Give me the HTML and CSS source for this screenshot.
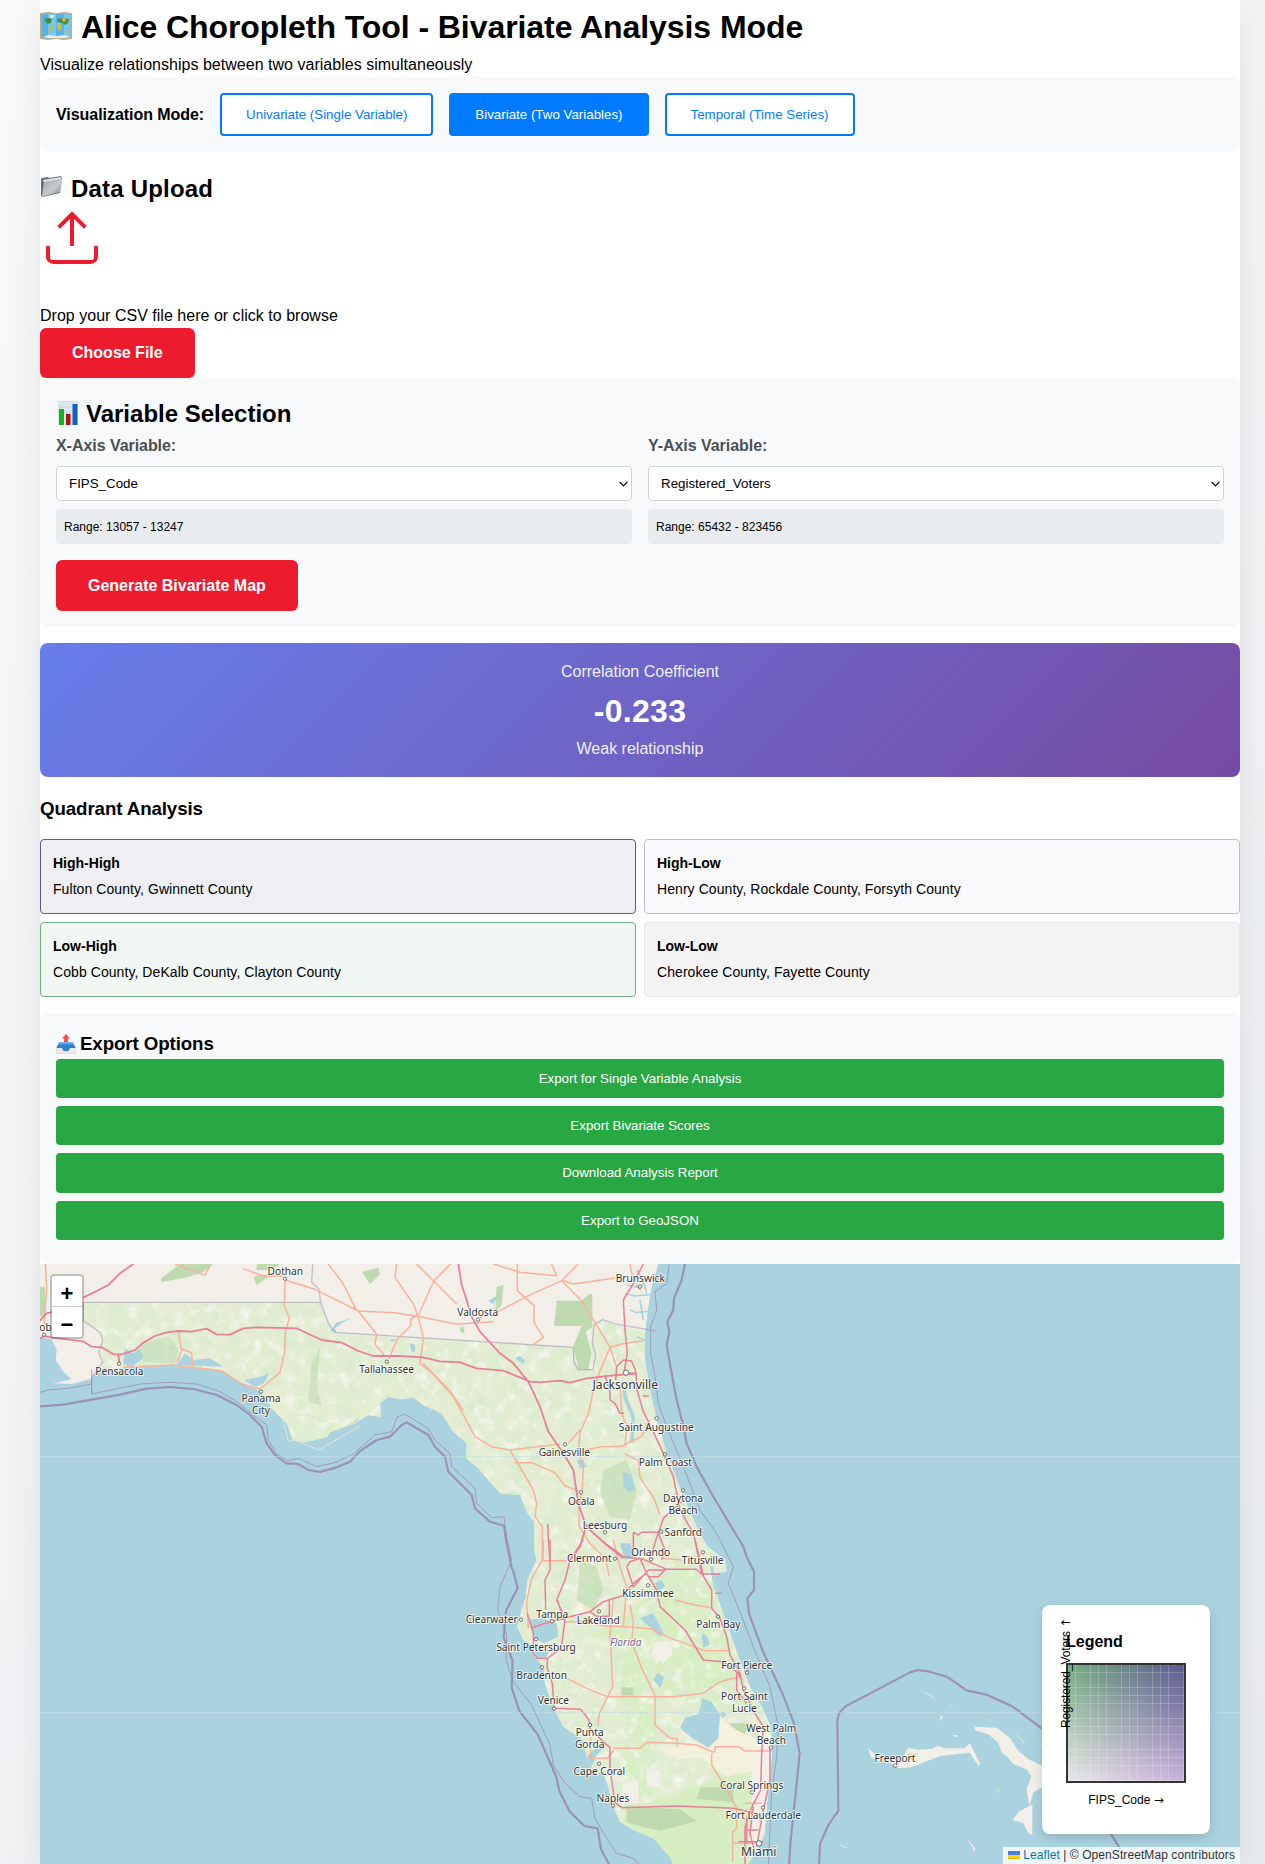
FILE: index.html
```html
<!DOCTYPE html>
<html lang="en">
<head>
<meta charset="utf-8">
<title>Alice Choropleth Tool - Bivariate Analysis Mode</title>
<link rel="stylesheet" href="styles.css">
</head>
<body>
<div class="container">
  <header>
    <h1><svg class="emoji-map" viewBox="0 0 32 28"><path fill="#c9a987" d="M0 1 8 0l8 1 8-1 8 1v26l-8 1-8-1-8 1-8-1z"/><path fill="#52b4e6" d="M1.500 2.500 8 1.500l8 1 8-1 6.500 1v23l-6.500 1-8-1-8 1-6.500-1z"/><path fill="#8ed3f2" d="M8 1.500l8 1v23l-8 1zM24 1.500l6.500 1v23l-6.500 1z" opacity=".6"/><path fill="#e8eef0" d="M10 3h5l-2 3h-3zM3 25l6-2 8 1 8-1 5 2-6 1H8z"/><path fill="#4d8a35" d="M4 7l5-1 3 1-1 4-3 1-2-2zM17 7l6-1 6 1-1 4-3 2-2-2-5-1z"/><path fill="#d6b740" d="M9 13l4 2-1 3-2 4-1-4zM17 11l4 0 1 3-2 5-2-1-1-4zM25 19l3-1 1 2-3 1zM22 6l3 0 1 3-3 1z"/></svg><span>Alice Choropleth Tool - Bivariate Analysis Mode</span></h1>
    <p class="line">Visualize relationships between two variables simultaneously</p>
  </header>

  <div class="mode-panel">
    <span class="mode-label">Visualization Mode:</span>
    <button class="mode">Univariate (Single Variable)</button>
    <button class="mode active">Bivariate (Two Variables)</button>
    <button class="mode">Temporal (Time Series)</button>
  </div>

  <section class="upload">
    <h2><svg class="emoji-folder" viewBox="0 0 24 24"><defs><linearGradient id="fold" x2="1" y2="1"><stop stop-color="#a3a9af"/><stop offset=".55" stop-color="#c5c9cd"/><stop offset="1" stop-color="#858c93"/></linearGradient></defs><path fill="#68717a" d="M1 4l1-1 6-1 1 1 12-2 1 2-2 15-18 4-1-2z"/><path fill="#dfe3e6" d="M3 5l18-3v3L4 8z"/><path fill="url(#fold)" d="M4 7l18.500-3.500L20 17 2 21.500z"/></svg><span>Data Upload</span></h2>
    <svg class="upload-icon" viewBox="0 0 24 24" fill="none" stroke="#ed1b2e" stroke-width="1.5"><path d="M21 15v4a2 2 0 0 1-2 2H5a2 2 0 0 1-2-2v-4"/><path d="M17 8l-5-5-5 5M12 3v12"/></svg>
    <p class="line">Drop your CSV file here or click to browse</p>
    <button class="primary">Choose File</button>
  </section>

  <section class="panel variables">
    <h2><svg class="emoji-chart" viewBox="0 0 20 24"><path fill="#dce6ee" d="M0 0h20v24H0z"/><path stroke="#c3d0da" stroke-width=".6" d="M0 .3h20M0 6h20M0 12h20M0 18h20"/><path fill="#10b81c" d="M1 8h5v16H1z"/><path fill="#b80d17" d="M8 13h4.500v11H8z"/><path fill="#1262bd" d="M14.500 3H19.500v21h-5z"/></svg><span>Variable Selection</span></h2>
    <div class="axes">
      <div>
        <label>X-Axis Variable:</label>
        <select><option>FIPS_Code</option></select>
        <div class="range">Range: 13057 - 13247</div>
      </div>
      <div>
        <label>Y-Axis Variable:</label>
        <select><option>Registered_Voters</option></select>
        <div class="range">Range: 65432 - 823456</div>
      </div>
    </div>
    <button class="primary">Generate Bivariate Map</button>
  </section>

  <section class="correlation">
    <div>Correlation Coefficient</div>
    <div class="coefficient">-0.233</div>
    <div>Weak relationship</div>
  </section>

  <section>
    <h3 class="quad-title"><span>Quadrant Analysis</span></h3>
    <div class="quadrants">
      <div class="quad hh"><h4>High-High</h4><p>Fulton County, Gwinnett County</p></div>
      <div class="quad hl"><h4>High-Low</h4><p>Henry County, Rockdale County, Forsyth County</p></div>
      <div class="quad lh"><h4>Low-High</h4><p>Cobb County, DeKalb County, Clayton County</p></div>
      <div class="quad ll"><h4>Low-Low</h4><p>Cherokee County, Fayette County</p></div>
    </div>
  </section>

  <section class="panel export">
    <h3><svg class="emoji-out" viewBox="0 0 20 20"><path fill="#eceae8" stroke="#d5d2cf" stroke-width=".6" d="M.5 13h19v6.500H.5z"/><path fill="#2f80d0" d="M3 8.500h14L19.500 14H14l-1.500 3h-5L6 14H.5z"/><path fill="#5ba7ea" d="M3 8.500h14l.8 2H2.200z"/><path fill="#fa5049" d="M10 0l4 4.500h-2V8H8V4.500H6z"/></svg><span>Export Options</span></h3>
    <button>Export for Single Variable Analysis</button>
    <button>Export Bivariate Scores</button>
    <button>Download Analysis Report</button>
    <button>Export to GeoJSON</button>
  </section>

  <div class="map">
    <svg class="tiles" viewBox="0 42 3600 1800">
      <defs>
        <filter id="mottle" x="0" y="0" width="1" height="1">
          <feTurbulence type="fractalNoise" baseFrequency=".02" numOctaves="5" seed="6"/>
          <feColorMatrix values="0 0 0 0 .71  0 0 0 0 .84  0 0 0 0 .62  2.800 0 0 0 -1.050"/>
          <feComposite in2="SourceGraphic" operator="in"/>
        </filter>
        <filter id="clearings" x="0" y="0" width="1" height="1">
          <feTurbulence type="fractalNoise" baseFrequency=".03" numOctaves="5" seed="21"/>
          <feColorMatrix values="0 0 0 0 .95  0 0 0 0 .94  0 0 0 0 .9  2.600 0 0 0 -1.350"/>
          <feComposite in2="SourceGraphic" operator="in"/>
        </filter>
        <clipPath id="land"><path id="coast" d="M0 42V262L35 268 50 300 47 330 70 365 95 388 40 400 95 402 150 388 165 370 250 352 400 347 545 362 600 395 660 422 700 480 740 520 760 572 800 575 860 562 872 545 940 522 985 495 1022 500 1020 460 1045 440 1080 448 1120 442 1150 465 1205 490 1240 545 1280 580V625L1315 655 1350 695 1380 730 1440 735 1460 785 1482 815 1482 900 1490 930 1462 990 1458 1040 1445 1080 1432 1130 1450 1170 1475 1182 1485 1220 1510 1250 1515 1300 1535 1360 1570 1430 1630 1470 1640 1520 1650 1560 1690 1570 1705 1610 1720 1670 1740 1715 1780 1740 1840 1765 1890 1820 1900 1842H2125L2155 1790 2172 1760 2180 1670 2190 1570 2197 1490 2192 1430 2165 1370 2130 1310 2095 1220 2060 1120 2035 1050 2020 970 2060 965 2055 930 2000 888 1970 830 1930 740 1880 610 1850 510 1830 420 1815 330V250L1825 170 1835 110 1855 42z"/></clipPath>
        <path id="florida" d="M130 157H842L865 220 885 247 1600 292 1610 350 1630 358H1650L1658 310 1648 280 1655 230 1680 212 1720 225 1840 248 2300 1000V1842H1300L1200 600 700 620 160 440 155 375 190 345 175 305 188 270 180 245 150 225 130 200z"/>
      </defs>
      <rect y="42" width="3600" height="1800" fill="#aad3df"/>
      <use href="#coast" fill="#f2efe9"/>
      <g clip-path="url(#land)">
        <use href="#florida" fill="#e4edd2"/>
        <path fill="#d7eec0" d="M1900 930l120 60 60 220 70 170-180-10-190-60-120-160 130-80zM1700 1180l110 60 40 180-10 220-100-20 20-220z"/>
        <use href="#florida" filter="url(#mottle)"/>
        <use href="#florida" filter="url(#clearings)"/>
        <path fill="#d7eec0" d="M1760 1665l60-5 280-95 90 60 30 230H1880l-60-80-70-60z"/>
        <g fill="#bfdab0">
          <path d="M1550 152h75l22-20h10v98l-20 15 18 65-10 48h-30l-15-70 25-60h-83zM363 85l57-43h100l-30 25-50 15-75 15zM650 60h50l20-18h-70zM640 80l60-10-50 35zM965 65l50-12 5 20-30 30zM0 110h15v90H0zM1258 230l15 0v18h-10zM1370 110l20-5-5 60-20 20z"/>
          <path opacity=".6" d="M300 280l90-20 25 40-10 40-95-5zM815 340l25-50-10 120 15 60-40-20zM880 550l80-50-20 30zM1690 660l70-30 30 90-20 90-60-10-30-70zM1620 930l50 20 20 70-30 60-50-30z"/>
          <path d="M1745 1312h35v24h-35zM1980 1612h100v45l-110-10zM2060 1420h70l-20 40-40-10zM1760 1668l160 10 50 35-110 30-100-25z"/>
        </g>
        <path fill="#f2efe9" d="M1840 1180l40-8 20 40-30 26-35-20zM1820 1560h40v50h-40zM1750 1600l45-10v70h-60zM2135 1480h60v230l-40 70-30 40 10-150z"/>
        <path fill="#f3f1dc" d="M2040 1400l50 40 60 30v90l-90 20-80-60-70 10-60-40 110-10z"/>
        <g fill="#aad3df">
          <path d="M1465 1110l40-5 45 15 5 40-45 20-25-15zM1480 1190l30 10 30-20-20 40-30 5zM250 340l5-45 25 15 20-15 10 30-40 30zM410 345l25-35 25 20 50-5 40 25zM612 390l50-10 25-10-15 30-30 10zM1985 1345l30 10 25 40-5 70-30 28-50-30-35-30 15-30 40-10 10-35zM1750 665l25 10 10 45-20 5-15-20zM1840 1290l12-20 20 10-10 35zM1800 1105l40-15 30 60-10 10zM1985 1150l15 8 10 25-20 10zM1745 380l20 70 20 50-5 80-10-5 5-70-25-60zM1345 152l20-12 8 5-15 18zM1425 325l15-8 15 15-5 10zM1740 880h30l15 40-30 10zM1050 268h20l-15 8zM1110 280l15 5v20h-10zM1610 630l20 0 10 20-20 5zM1845 1000l20-10 10 20-20 15zM2040 1390l10-5 10 10-15 10z"/>
          <path d="M870 242l20-25 45-12-25 10-25 20 5 12zM1620 1545l40-45 40-15-30 30-20 45z"/>
          <path fill="none" stroke="#aad3df" stroke-width="9" d="M2015 950l10 60 30 60 20 60 60 180 40 60"/>
          <path fill="none" stroke="#aad3df" stroke-width="5" d="M1755 130l30 8 50-5M1770 180l20 8 40-5M1760 105l35 8 20-15M1790 260l25 10M1790 60l20 30 10 40M1800 150l10 60"/>
        </g>
      </g>
      <g fill="#f2efe9">
        <path d="M2484 1495l30 25 45 25 20 10 40-5 80-32 90-10 27 40 5-5-22-45-10-18-15 15-60 0-20-8-20 10-40 2-30-5-15 28-25 15-50-5-20-8zM2805 1430l65 3 40 30 25 40 30 25 45 20v60l-30 20-12 40-8-50 14-40-14-20-40-15-20-25-15-10-10-30-30-25-40-12zM2917 1710l20-25 40-22v92l-12-5-15-30zM2780 1765l25 30 0 10zM2740 1455h12v5h-12zM2700 1400l10-5-8 20z"/>
        <path fill="#cfe3bd" d="M2600 1510l35 0-10 15-25 5zM2870 1612l10 10-5 10z"/>
      </g>
      <g fill="none" stroke="#dfe6dc" stroke-width="3"><path d="M730 512l15 62 55-8M765 570l70 30 125-72M2650 1325l20 10 15 12M2730 1365l10 8M2845 1410l10 6M2925 1450l30 30M3000 1485l25 20M2400 1785l20 8"/></g>

      <g fill="none" stroke="#9f93b4" stroke-opacity=".55" stroke-width="4" stroke-linejoin="round">
        <path d="M130 157H842M818 42l-3 55 22 20 5 40 23 63 20 27 715 45 2 45 12 22h45l8-45-10-35 5-55 25-15 35 12 125 22M130 157v55l50 35 8 25-12 35 12 30-33 45v50"/>
      </g>
      <g fill="none" stroke="#f9b19a" stroke-width="4.500" stroke-linejoin="round">
        <path d="M16 42l4 70-8 120M405 42l50 20 40 14 15-30M608 55l60 23h60M735 85l-2 80 15 40-12 40-2 60-14 62-60 50M735 90l90 28 130 65 110 5 75 12 110 23 110-8M955 183l55 70-5 30 30 35M865 42l45 60 40 80M1070 42l-5 40 55 80 15 40 15 60-10 80 30 20 60 60 40 60M1232 42l-50 50-45 100-25 15v20l-40 40-25 60M1130 42l50 50 70 70M415 243l10 60-15 35M425 297l30 12 3 40M250 352l150-7 145 17 60 40 55 15"/>
        <g transform="translate(1080 0)"><path d="M280 42l80 25 110 10-15-35M535 42l-50 50-110 50-75 40-60 20M490 92l30 10 125-18M485 92l60 60 55 90 30 50-30 70-20 60-15 70-25 55-5 60 15 40-3 70-10 60v50l30 50 50 50 10 50M352 42v80l50 45v50l28 45-30 22M70 340l90 100 65 120 50 30 55 10 150-18M330 600l70 120 10 40-5 40 22 30v100M345 638h50l70 30 30 40 40 14M545 602l60-12 60-1 20-10 40-20 25-50M630 292l35-10 65-10M630 292l20 60M660 400l5 90 15 40-5 60M675 612l40 20 5 50 40 60 20 50M690 42l10 50 22 30M505 580l35-40"/></g>
        <g transform="translate(1200 870)"><path d="M310 0v55l-35 60-15 70 5 80M310 62h70M520 0l20 80 20 60-10 120M375 245h70l40 12 90 5 60 5 50 25 110 40h70M570 195l10 50-5 60 30 80 40 80v90l45 40 22 1v25M520 180l-10 100 8 160-40 80-5 40M380 415l60 30 60 25h200l90-10 50-35 60-15M520 625h80l20-18 90 3 60 5 45 20h10v-15h70l20 13h80M815 640v35l50 80 25 50v60l-12 12v90M705 180l60 15 50 8M452 590v65h50l20-25M880 910h90M915 790h50M725 60l-60-5"/></g>
      </g>
      <g fill="none" stroke="#e97f98" stroke-width="5.500" stroke-linejoin="round">
        <path d="M130 143l75-38 35-35 40-28M0 212l20-22 80-20M0 266l12-8 20 4 98 12 25 16 30 2 35 21h25l40-13 25-22 35-20 35-11 35-4 40 2 45-9 30 17 40 1 40-19 40-3 120 3 75 35 60 8 50 25 45 15h75l75 4 50 12 60 3 50 18 80 7 80 33 30 2 60-5 30 6 50-13 80-9 70-5M235 313l3 25M1255 42l10 63 15 45 15 50 25 45 60 65 40 30 45 55 35 75 25 75 45 65 30 50 15 100 20 60 15 20 50 45 50 40M1635 840l-15 50-30 40"/>
        <g stroke-width="4.500">
        <g transform="translate(1080 0)"><path d="M730 42l-30 58-30 50 5 90 7 70-10 58M647 390l3-40 20-20 25 3 12 30 5 60 18 62 25 50 35 75 30 70 20 100 40 70 20 80 10 50M443 822l3 60 4 48M615 375l15 50v25l15 10 15 30h12M675 370h35M728 438h18M700 847l15 8 10-8h50l-25 80M700 847v70M850 750l-60 55-15 45 20 50-10 30"/></g>
        <g transform="translate(1200 870)"><path d="M330 0v90l-15 30 2 90M430 0l-40 60-15 60-25 60 25 55-7 60-5 30-41 30v30l15 45 5 75 80 3 25 32 5 30 58 53v65l15 100 20 15 165-5 170 7 65 15M272 265l58-20 120-30 40-30 55-17 35-38 38-30M352 180l20 60M450 215l20 14h38v-50M262 220l18 60v60l12 15h30M482 0l68 50 60 8 70 30h90l15 14h55M765 0l20 100 30 50v55l25 30 20 55 10 55 30 55 10 50 35 70 25 40-5 80-3 110-27 52-20 60v110M560 80l10-15 30-10 20 45 30 50 10 50 75 70 55 90 60 5 45 35 10 20M560 80l20 60 45-50h50l-20 20h-30M890 400v50l30 40M990 620v100l-20 90-20 110M920 870h35M940 800l-10 80 15 60M895 905h75M920 830v80M825 160h20"/></g>
        </g>
      </g>

      <g fill="none" stroke="#9b92b5" stroke-linejoin="round">
        <g stroke-width="6.500">
          <path d="M0 469l70-5 90-16 80-14 80-18 70-5 70 6 70 18 60 30 40 30 35 35 15 50 25 35 35 25 35 2 30 18 35 6 50-14 40-17 30-32 50-33 40-10 35-35 15-8 65 38 20 35 30 30 10 45 70 70 10 40 45 40 42 12 6 43 17 85 5 8 13 50-35 70-7 80 27 70-3 80 23 70 55 70 55 125 10 45 30 60 45 45 40 7 10 63 35 65 35 45 50 10 20 17M1935 42l-10 48-23 55-2 35-18 35 6 30-8 40 15 85 15 80 18 70 12 60 30 70 50 90 60 100 30 50 10 30 22 45v55l-20 25 5 45 40 110 60 130 35 90 17 90-12 120-15 140-7 112M2337 1842l3-60 25-57 30-43-3-272 6-22 17-18 195-103 25-7 35 5 50 15 60 41 60 13 75 34 50 37 60 45M3200 1730l45 75"/>
        </g>
        <g stroke-width="2.500">
          <path d="M0 427l25-7 60-5 70-13M155 360v72l145-30 90-5 80 5 70 23 50 30 50 40 40 30 5 45 25 42 35 20 30-7 55 25 55-12 55-26 30-27 35-30 50-10 17-45 23-7 70 42 20 35 45 42 5 38 70 65 5 45 45 43 37-3 8 60 15 70-35 80-7 70 27 75-2 75 22 65 55 70 55 120 10 60 35 55 45 40 35 5 10 60 35 60 30 45 50 15 30 32M1888 42l-8 58-35 25 5 55-18 50v80l13 70 10 80 25 70 50 120 50 130 50 70 40 80 10 20-15 50 25 60 50 130 50 120 25 120-5 90-15 110-10 212"/>
        </g>
      </g>
      <path d="M0 620H3600M0 1387H3600" stroke="#c3dcdf" stroke-width="2"/>

      <g class="dots">
        <circle cx="12" cy="254" r="5"/><circle cx="237" cy="341" r="5"/><circle cx="735" cy="86" r="5"/><circle cx="663" cy="425" r="5"/><circle cx="1041" cy="335" r="5"/><circle cx="1314" cy="209" r="5"/><circle cx="1800" cy="110" r="5"/><circle cx="1758" cy="368" r="8"/><circle cx="1850" cy="505" r="5"/><circle cx="1575" cy="583" r="5"/><circle cx="1875" cy="613" r="5"/><circle cx="1929" cy="721" r="5"/><circle cx="1623" cy="727" r="5"/><circle cx="1695" cy="847" r="5"/><circle cx="1863" cy="845" r="5"/><circle cx="1989" cy="907" r="5"/><circle cx="1725" cy="926" r="5"/><circle cx="1833" cy="928" r="5"/><circle cx="1824" cy="1006" r="5"/><circle cx="1443" cy="1109" r="5"/><circle cx="1536" cy="1114" r="5"/><circle cx="1677" cy="1084" r="5"/><circle cx="2034" cy="1100" r="5"/><circle cx="1488" cy="1168" r="5"/><circle cx="1506" cy="1252" r="5"/><circle cx="2121" cy="1268" r="5"/><circle cx="2112" cy="1315" r="5"/><circle cx="1542" cy="1376" r="5"/><circle cx="1650" cy="1425" r="5"/><circle cx="2193" cy="1493" r="5"/><circle cx="1677" cy="1541" r="5"/><circle cx="1719" cy="1667" r="5"/><circle cx="2136" cy="1627" r="5"/><circle cx="2169" cy="1673" r="5"/><circle cx="2157" cy="1780" r="8"/><circle cx="2565" cy="1547" r="5"/>
      </g>
      <g class="places">
        <text x="19" y="243">Mobile</text>
        <text x="238" y="374">Pensacola</text>
        <text x="736" y="74">Dothan</text>
        <text x="663" y="457">Panama</text><text x="663" y="493">City</text>
        <text x="1040" y="369">Tallahassee</text>
        <text x="1313" y="198">Valdosta</text>
        <text x="1801" y="97">Brunswick</text>
        <text class="large" x="1756" y="416">Jacksonville</text>
        <text x="1849" y="542">Saint Augustine</text>
        <text x="1573" y="618">Gainesville</text>
        <text x="1876" y="649">Palm Coast</text>
        <text x="1929" y="757">Daytona</text><text x="1929" y="792">Beach</text>
        <text x="1624" y="764">Ocala</text>
        <text x="1695" y="836">Leesburg</text>
        <text x="1930" y="858">Sanford</text>
        <text x="1832" y="918">Orlando</text>
        <text x="1988" y="941">Titusville</text>
        <text x="1648" y="937">Clermont</text>
        <text x="1824" y="1041">Kissimmee</text>
        <text x="1537" y="1103">Tampa</text>
        <text x="1355" y="1120">Clearwater</text>
        <text x="1675" y="1121">Lakeland</text>
        <text x="2035" y="1134">Palm Bay</text>
        <text class="state" x="1757" y="1187">Florida</text>
        <text x="1488" y="1204">Saint Petersburg</text>
        <text x="1505" y="1287">Bradenton</text>
        <text x="2120" y="1257">Fort Pierce</text>
        <text x="1540" y="1363">Venice</text>
        <text x="2113" y="1351">Port Saint</text><text x="2113" y="1386">Lucie</text>
        <text x="1649" y="1459">Punta</text><text x="1649" y="1494">Gorda</text>
        <text x="2194" y="1445">West Palm</text><text x="2194" y="1481">Beach</text>
        <text x="1678" y="1574">Cape Coral</text>
        <text x="1719" y="1655">Naples</text>
        <text x="2135" y="1616">Coral Springs</text>
        <text x="2170" y="1708">Fort Lauderdale</text>
        <text class="large" x="2156" y="1819">Miami</text>
        <text x="2565" y="1536">Freeport</text>
      </g>
    </svg>

    <div class="zoom-control"><a>+</a><a>−</a></div>

    <div class="legend">
      <h4>Legend</h4>
      <div class="legend-grid"></div>
      <div class="x-label">FIPS_Code <span class="arrow">→</span></div>
      <div class="y-label">Registered_Voters <span class="arrow">↑</span></div>
    </div>

    <div class="attribution"><svg viewBox="0 0 12 8"><path fill="#4c7be1" d="M0 0h12v4H0z"/><path fill="#ffd500" d="M0 4h12v3H0z"/><path fill="#e0bc00" d="M0 7h12v1H0z"/></svg> <a>Leaflet</a> | © OpenStreetMap contributors</div>
  </div>
</div>
</body>
</html>
```
FILE: styles.css
```css
* {
  margin: 0;
  padding: 0;
  box-sizing: border-box;
}

body {
  font-family: "Liberation Sans", Arial, sans-serif;
  font-size: 16px;
  line-height: 1.6;
  color: #000;
  background: linear-gradient(135deg, #f8f9fa 0%, #e9ecef 100%);
  overflow: hidden;
}

.container {
  width: 1200px;
  height: 1864px;
  margin-left: 40px;
  background: #fff;
  box-shadow: 0 10px 36px rgba(0, 0, 0, .08);
}

h1, h2, h3 {
  display: flex;
  align-items: center;
  height: 1.6em;
}

h1 { font-size: 32px; gap: 9px; letter-spacing: -.07px; }
h2 { font-size: 24px; }
h3 { font-size: 18.72px; letter-spacing: -.1px; }

h1 span,
h2 span,
h3 span {
  padding-top: 3px;
  line-height: 1.2;
}

.emoji-map { width: 32px; height: 28px; }
.emoji-folder { width: 24px; height: 24px; margin-right: 7px; }
.emoji-chart { width: 20px; height: 24px; margin: 0 8px 0 2px; }
.emoji-out { width: 20px; height: 20px; margin-right: 4px; }

.upload h2 { letter-spacing: .2px; }
.upload h2 span { padding-top: 4px; }
.export h3 span { padding-top: 1px; }

.line {
  height: 25.6px;
  padding-top: 1px;
  letter-spacing: .02px;
}

button {
  font-family: inherit;
  border: 0;
}

.mode-panel {
  display: flex;
  align-items: center;
  gap: 16px;
  padding: 16px;
  margin-bottom: 16px;
  background: #f8f9fa;
  border-radius: 8px;
}

.mode-label {
  padding-top: 1px;
  font-weight: bold;
  letter-spacing: -.05px;
}

.mode {
  height: 43px;
  padding: 0 24px;
  font-size: 13.333px;
  color: #007bff;
  background: #fff;
  border: 2px solid #007bff;
  border-radius: 4px;
}

.mode.active { color: #fff; background: #007bff; }

.upload-icon {
  display: block;
  width: 64px;
  height: 64px;
  margin-bottom: 32px;
}

.primary {
  display: block;
  height: 50.4px;
  padding: 0 32px;
  font-size: 16px;
  font-weight: bold;
  color: #fff;
  background: #ed1b2e;
  border-radius: 6px;
}

.panel {
  padding: 16px;
  background: #f8f9fa;
  border-radius: 8px;
}

.axes {
  display: grid;
  grid-template-columns: 1fr 1fr;
  gap: 16px;
  margin-bottom: 16px;
}

label {
  display: block;
  margin-bottom: 8px;
  font-weight: bold;
  letter-spacing: -.05px;
  color: #495057;
}

select {
  display: block;
  width: 100%;
  height: 35px;
  padding: 0 12px;
  margin-bottom: 8px;
  appearance: none;
  font-family: inherit;
  font-size: 13.333px;
  color: #000;
  background: #fff url("data:image/svg+xml,%3Csvg xmlns='http://www.w3.org/2000/svg' width='9' height='6' fill='none' stroke='%23000' stroke-width='1.2'%3E%3Cpath d='M.6.8l3.9 4 3.900-4'/%3E%3C/svg%3E") no-repeat right 3px center;
  border: 1px solid #ced4da;
  border-radius: 4px;
}

.range {
  height: 35.2px;
  padding: 8.6px 8px 0;
  font-size: 12px;
  background: #e9ecef;
  border-radius: 4px;
}

.correlation {
  margin: 16px 0;
  padding: 16px;
  text-align: center;
  color: rgba(255, 255, 255, .92);
  background: linear-gradient(135deg, #667eea 0%, #764ba2 100%);
  border-radius: 8px;
}

.coefficient {
  height: 51.2px;
  padding-top: 2px;
  font-size: 32px;
  font-weight: bold;
  letter-spacing: .3px;
  color: #fff;
}

.quad-title { margin-bottom: 16px; }

.quadrants {
  display: grid;
  grid-template-columns: 1fr 1fr;
  gap: 8px;
  margin-bottom: 16px;
}

.quad {
  padding: 12px;
  font-size: 14px;
  border: 1px solid;
  border-radius: 4px;
}

.quad h4 { margin-bottom: 4px; font-size: 14px; }
.quad p { letter-spacing: .07px; }
.hh { background: #eeeef3; border-color: #5a5a8f; }
.hl { background: #f9f8fb; border-color: #c8b3d9; }
.lh { background: #f1f7f2; border-color: #73ae80; }
.ll { background: #f3f3f3; border-color: #e8e8e8; }

.export button {
  display: block;
  width: 100%;
  height: 39.33px;
  margin-bottom: 8px;
  font-size: 13.333px;
  color: #fff;
  background: #28a745;
  border-radius: 4px;
}

.map {
  position: relative;
  height: 600px;
  overflow: hidden;
  background: #aad3df;
}

.tiles {
  display: block;
  width: 1200px;
  height: 600px;
}

.dots {
  fill: #fff;
  stroke: #555;
  stroke-width: 2.5;
}

.places {
  font-family: "Noto Sans", sans-serif;
  font-size: 30.5px;
  text-anchor: middle;
  fill: #333;
  stroke: rgba(255, 255, 255, .75);
  stroke-width: 6px;
  stroke-linejoin: round;
  paint-order: stroke;
}

.places .large { font-size: 36.5px; }
.places .state { font-style: italic; fill: #7d6590; }

.zoom-control {
  position: absolute;
  top: 10px;
  left: 10px;
  width: 34px;
  border: 2px solid rgba(0, 0, 0, .2);
  border-radius: 4px;
  background: #fff;
  background-clip: padding-box;
}

.zoom-control a {
  display: block;
  height: 30px;
  text-align: center;
  font: bold 22px/35px "Liberation Sans", sans-serif;
}

.zoom-control a:first-child {
  height: 31px;
  border-bottom: 1px solid #ccc;
}

.legend {
  position: absolute;
  right: 30px;
  bottom: 29.6px;
  width: 168px;
  padding: 24px;
  background: #fff;
  border-radius: 8px;
  box-shadow: 0 4px 12px rgba(0, 0, 0, .15);
}

.legend h4 { margin-bottom: 8px; }

.legend-grid {
  position: relative;
  width: 120px;
  height: 120px;
  border: 2px solid #333;
  background: linear-gradient(90deg, #e8e8e8, #d6c6df 60%, #c8b3d9);
}

.legend-grid::before,
.legend-grid::after {
  content: "";
  position: absolute;
  inset: 0;
}

.legend-grid::before {
  background: linear-gradient(90deg, #73ae80, #677f88 55%, #5a5a8f);
  mask-image: linear-gradient(#000, transparent);
}

.legend-grid::after {
  background:
    repeating-linear-gradient(90deg, transparent 0 7px, rgba(255, 255, 255, .2) 7px 7.733px),
    repeating-linear-gradient(transparent 0 7px, rgba(255, 255, 255, .2) 7px 7.733px);
}

.x-label {
  height: 19.2px;
  margin-top: 8px;
  font-size: 12px;
  line-height: 19.2px;
  text-align: center;
}

.y-label {
  position: absolute;
  left: 24px;
  top: 68px;
  font-size: 12px;
  line-height: 19px;
  letter-spacing: -.1px;
  white-space: nowrap;
  transform: translate(-50%, -50%) rotate(-90deg);
}

.arrow {
  font-family: "DejaVu Sans", sans-serif;
  line-height: 1;
}

.attribution {
  position: absolute;
  right: 0;
  bottom: 0;
  padding: 0 5px;
  font-size: 12px;
  line-height: 16.8px;
  letter-spacing: .08px;
  color: #333;
  background: rgba(255, 255, 255, .8);
}

.attribution svg { width: 12px; height: 8px; }
.attribution a { color: #0078a8; }
```
